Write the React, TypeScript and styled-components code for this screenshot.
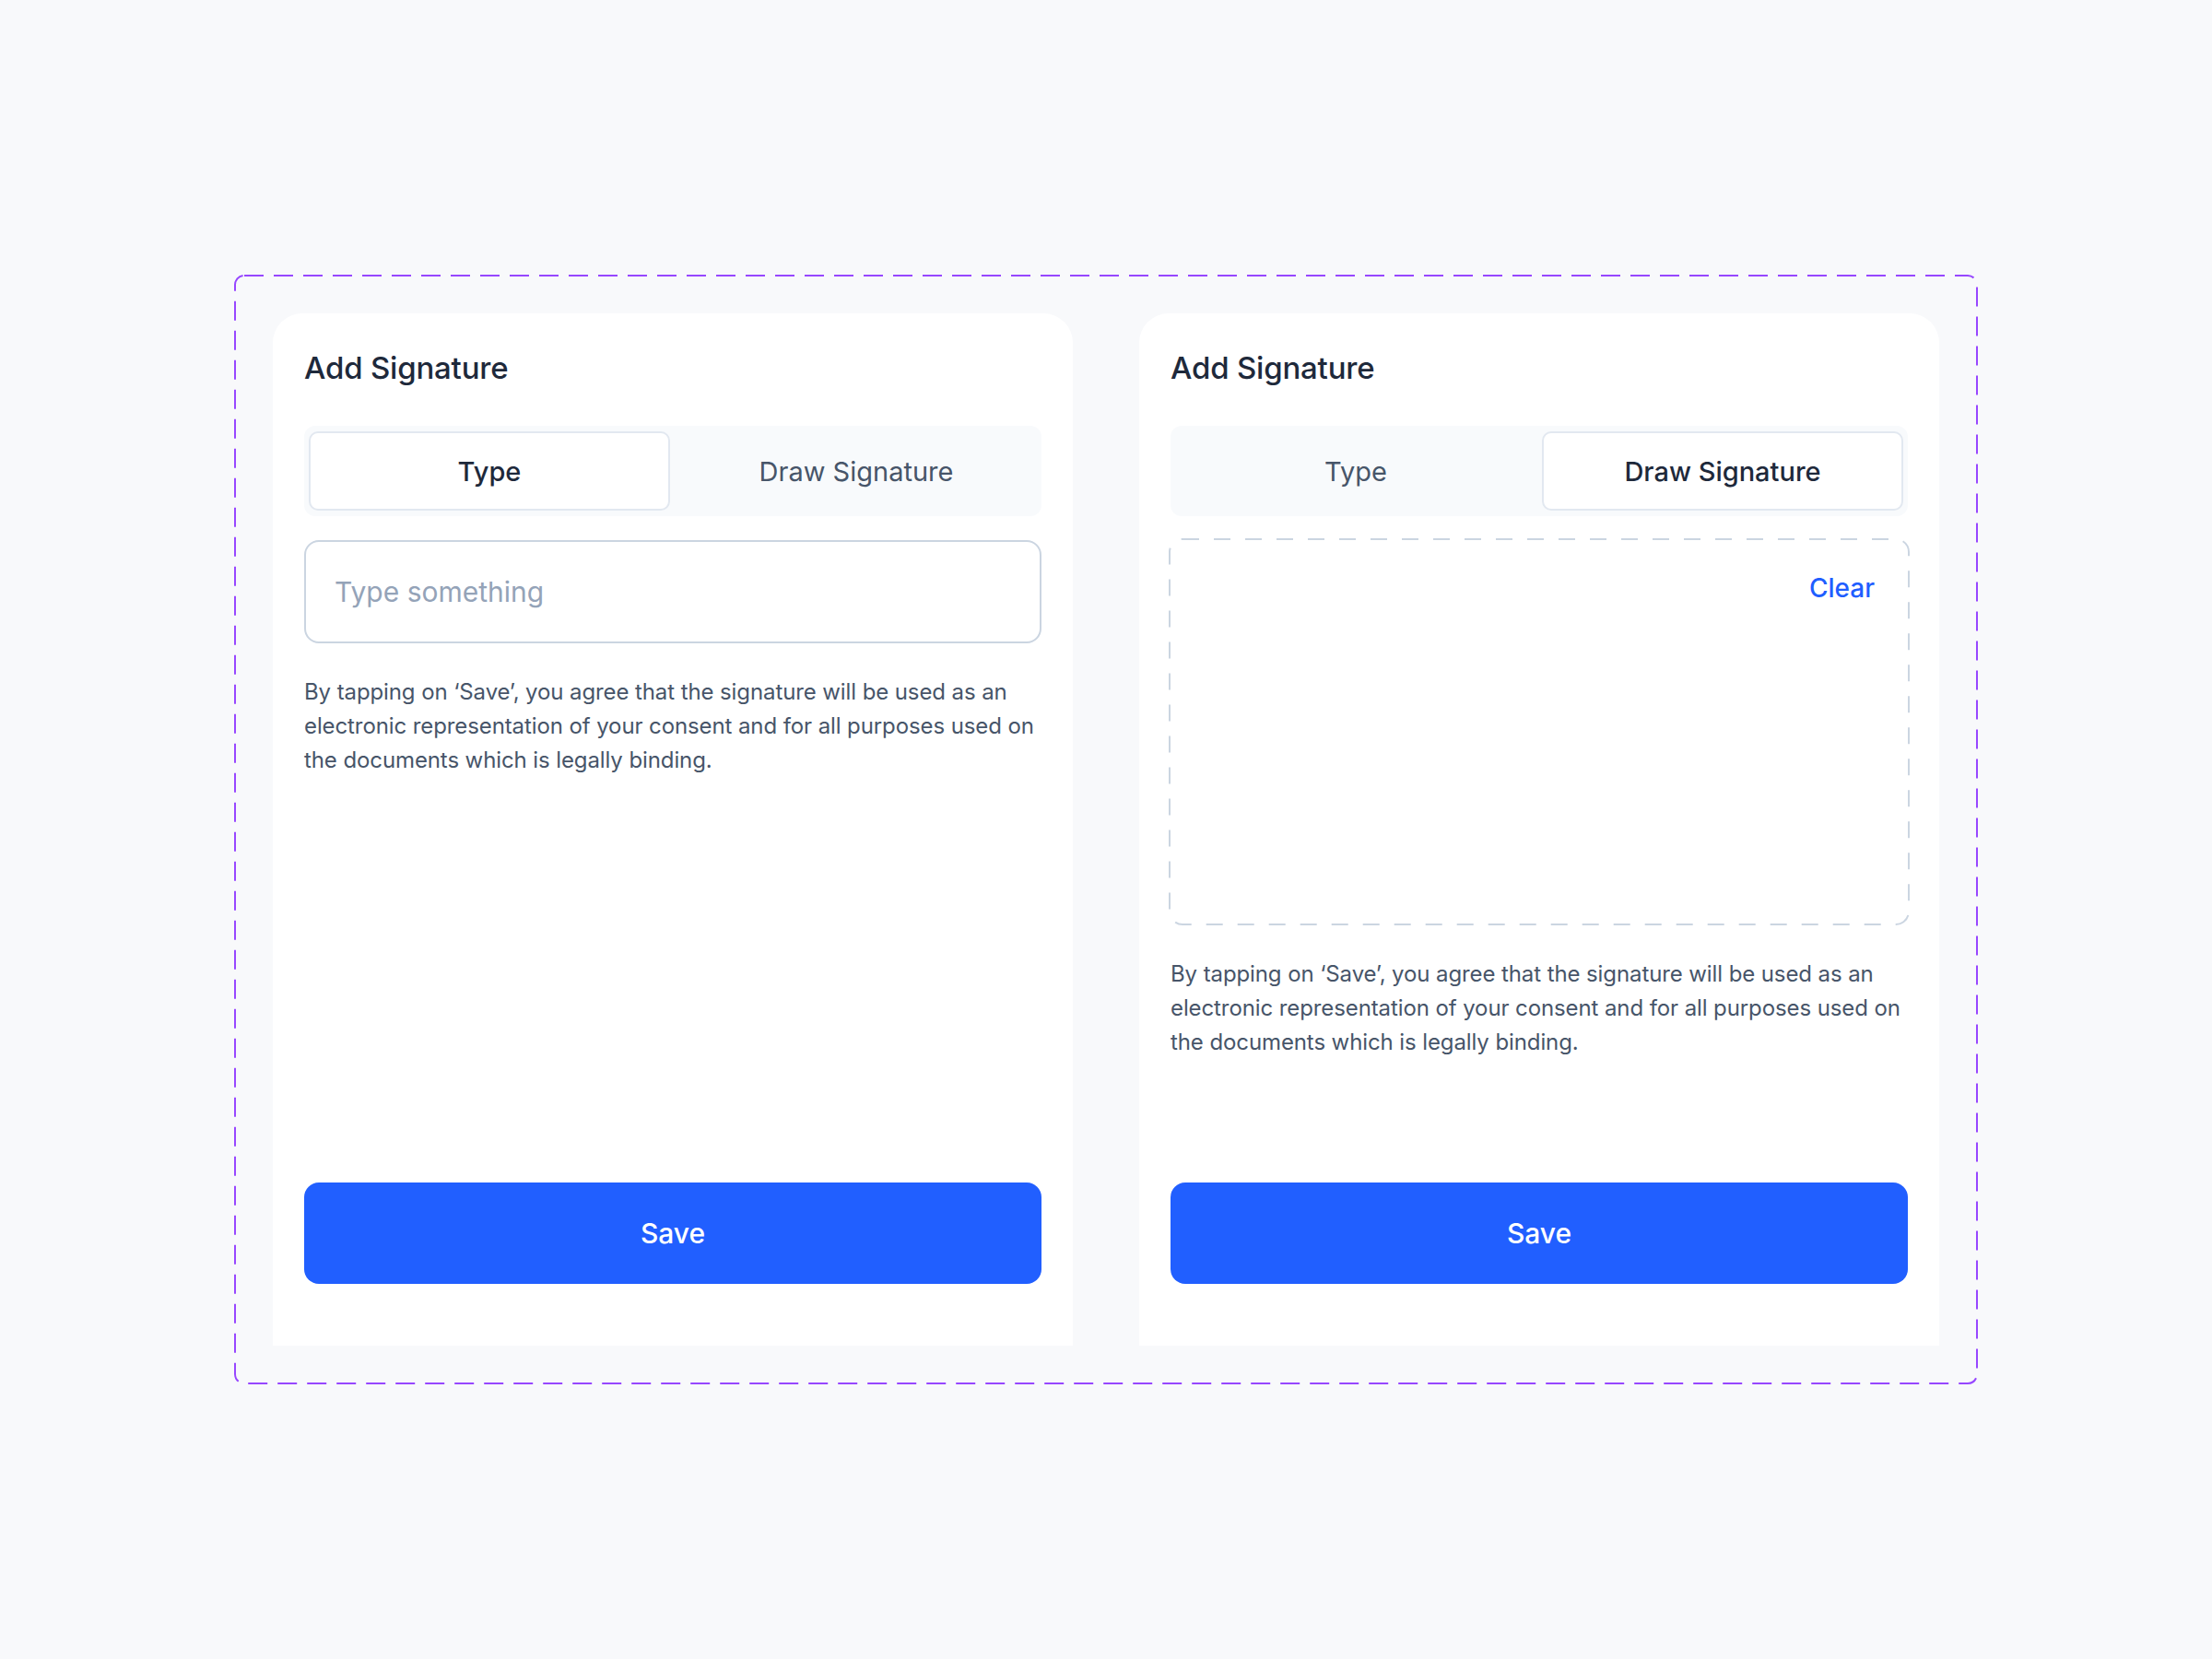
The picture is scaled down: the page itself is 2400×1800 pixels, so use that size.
import React, { useState } from "react";
import styled, { createGlobalStyle } from "styled-components";

const GlobalStyle = createGlobalStyle`
  html, body {
    margin: 0;
    padding: 0;
    background: #f8f9fb;
  }
  body {
    font-family: Inter, "Noto Sans", "Liberation Sans", sans-serif;
    -webkit-font-smoothing: antialiased;
  }
  * { box-sizing: border-box; }
`;

const Page = styled.main`
  min-height: 100vh;
  display: flex;
  align-items: center;
  justify-content: center;
`;

const Frame = styled.section`
  position: relative;
  display: flex;
  gap: 72px;
  padding: 42px;
`;

const FrameOutline = styled.svg`
  position: absolute;
  inset: 0;
  width: 100%;
  height: 100%;
  overflow: visible;
  pointer-events: none;
`;

const Card = styled.div`
  width: 868px;
  height: 1120px;
  background: #ffffff;
  border-radius: 32px 32px 0 0;
  padding: 39px 34px 67px 34px;
  display: flex;
  flex-direction: column;
`;

const Title = styled.h2`
  margin: 0;
  font-size: 33px;
  line-height: 40px;
  font-weight: 500;
  color: #1e293b;
  letter-spacing: -0.2px;
`;

const Tabs = styled.div`
  margin-top: 43px;
  height: 98px;
  padding: 6px 5px;
  gap: 6px;
  background: #f8fafc;
  border-radius: 12px;
  display: grid;
  grid-template-columns: 1fr 1fr;
`;

const Tab = styled.button<{ $active: boolean }>`
  border: 2px solid ${(p) => (p.$active ? "#e2e8f0" : "transparent")};
  background: ${(p) => (p.$active ? "#ffffff" : "transparent")};
  border-radius: 10px;
  font-family: inherit;
  font-size: 29px;
  font-weight: ${(p) => (p.$active ? 500 : 400)};
  color: ${(p) => (p.$active ? "#1e293b" : "#475569")};
  cursor: pointer;
  padding: 0;
`;

const TextField = styled.input`
  margin-top: 26px;
  height: 112px;
  width: 100%;
  border: 2px solid #cbd5e1;
  border-radius: 16px;
  padding: 0 31px;
  font-family: inherit;
  font-size: 30px;
  color: #1e293b;
  outline: none;
  &::placeholder {
    color: #94a3b8;
  }
`;

const Pad = styled.div`
  position: relative;
  margin: 24px -2px 0 -2px;
  height: 420px;
  display: flex;
  flex-direction: column;
  align-items: flex-end;
  padding: 37px 38px;
`;

const PadOutline = styled.svg`
  position: absolute;
  inset: 0;
  width: 100%;
  height: 100%;
  overflow: visible;
  pointer-events: none;
`;

const ClearButton = styled.button`
  position: relative;
  border: 0;
  background: none;
  padding: 0;
  font-family: inherit;
  font-size: 28px;
  line-height: 34px;
  font-weight: 500;
  color: #1f5eff;
  cursor: pointer;
`;

const Notice = styled.p`
  margin: 34px -4px 0 0;
  font-size: 24px;
  line-height: 37px;
  letter-spacing: -0.1px;
  color: #475569;
`;

const SaveButton = styled.button`
  margin-top: auto;
  height: 110px;
  width: 100%;
  border: 0;
  border-radius: 16px;
  background: #215fff;
  color: #ffffff;
  font-family: inherit;
  font-size: 30px;
  font-weight: 500;
  cursor: pointer;
`;

type Mode = "type" | "draw";

function DashedRect({ color, dash, radius }: { color: string; dash: string; radius: number }) {
  return (
    <rect
      x="1"
      y="1"
      width="calc(100% - 2px)"
      height="calc(100% - 2px)"
      rx={radius}
      fill="none"
      stroke={color}
      strokeWidth="2"
      strokeDasharray={dash}
    />
  );
}

const NOTICE =
  "By tapping on \u2018Save\u2019, you agree that the signature will be used as an electronic representation of your consent and for all purposes used on the documents which is legally binding.";

function SignatureCard({ initial }: { initial: Mode }) {
  const [mode, setMode] = useState<Mode>(initial);
  return (
    <Card>
      <Title>Add Signature</Title>
      <Tabs>
        <Tab $active={mode === "type"} onClick={() => setMode("type")}>
          Type
        </Tab>
        <Tab $active={mode === "draw"} onClick={() => setMode("draw")}>
          Draw Signature
        </Tab>
      </Tabs>
      {mode === "type" ? (
        <TextField placeholder="Type something" />
      ) : (
        <Pad>
          <PadOutline>
            <DashedRect color="#cbd5e1" dash="18 16" radius={14} />
          </PadOutline>
          <ClearButton>Clear</ClearButton>
        </Pad>
      )}
      <Notice>{NOTICE}</Notice>
      <SaveButton>Save</SaveButton>
    </Card>
  );
}

export default function App() {
  return (
    <>
      <GlobalStyle />
      <Page>
        <Frame>
          <FrameOutline>
            <DashedRect color="#9747ff" dash="21 11" radius={10} />
          </FrameOutline>
          <SignatureCard initial="type" />
          <SignatureCard initial="draw" />
        </Frame>
      </Page>
    </>
  );
}
